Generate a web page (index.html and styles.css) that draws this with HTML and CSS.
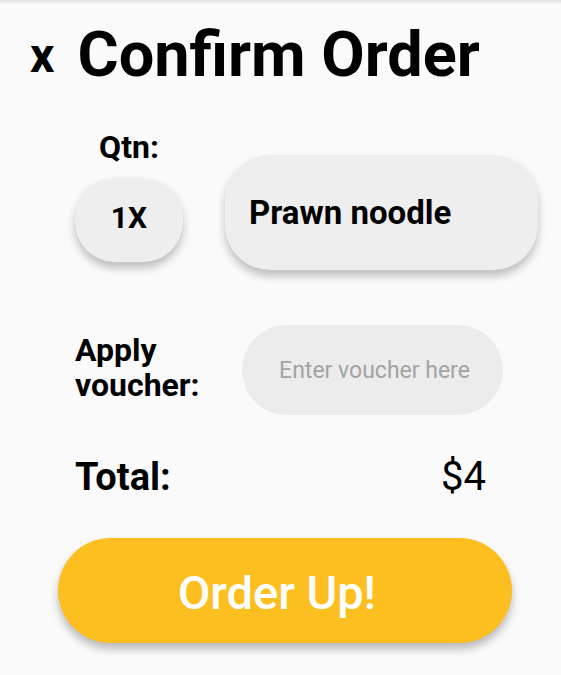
FILE: index.html
```html
<!DOCTYPE html>
<html lang="en">
<head>
<meta charset="utf-8">
<title>Confirm Order</title>
<link rel="stylesheet" href="styles.css">
</head>
<body>
<main class="sheet">
  <div class="topshade"></div>
  <header class="title-bar">
    <span class="close">x</span>
    <h1 class="title">Confirm Order</h1>
  </header>

  <section class="qty-row">
    <div class="qty-col">
      <div class="qty-label">Qtn:</div>
      <div class="qty-pill">1X</div>
    </div>
    <div class="item-box">Prawn noodle</div>
  </section>

  <section class="voucher-row">
    <div class="voucher-label">Apply<br>voucher:</div>
    <div class="voucher-input">Enter voucher here</div>
  </section>

  <section class="total-row">
    <span class="total-label">Total:</span>
    <span class="total-value">$4</span>
  </section>

  <div class="action">
    <button class="order-btn">Order Up!</button>
  </div>
</main>
</body>
</html>
```

FILE: styles.css
```css
html, body {
  margin: 0;
  padding: 0;
  background: #fafafa;
}

body {
  font-family: Roboto, "Liberation Sans", Arial, sans-serif;
  color: #000;
  width: 561px;
  height: 675px;
  overflow: hidden;
}

.sheet {
  display: block;
}

.topshade {
  height: 5px;
  background: linear-gradient(#e2e2e2, #fafafa);
}

.title-bar {
  display: flex;
  align-items: flex-start;
  gap: 23px;
  margin-top: 18px;
  padding-left: 30px;
  height: 64px;
}

.close {
  margin-top: 9px;
  font-size: 48px;
  font-weight: 700;
  line-height: 48px;
}

.title {
  margin: 0;
  font-size: 63px;
  font-weight: 700;
  line-height: 64px;
}

.qty-row {
  display: flex;
  align-items: flex-start;
  gap: 42px;
  margin-top: 43px;
  padding-left: 75px;
}

.qty-col {
  width: 108px;
  display: flex;
  flex-direction: column;
  align-items: center;
}

.qty-label {
  font-size: 32px;
  font-weight: 700;
  line-height: 34px;
}

.qty-pill {
  margin-top: 14px;
  width: 108px;
  height: 84px;
  border-radius: 40px;
  background: #eeeeee;
  box-shadow: 0 6px 9px rgba(0, 0, 0, 0.24);
  display: flex;
  align-items: center;
  justify-content: center;
  box-sizing: border-box;
  padding-bottom: 6px;
  font-size: 30px;
  font-weight: 700;
}

.item-box {
  margin-top: 25px;
  width: 313px;
  height: 115px;
  border-radius: 45px;
  background: #eeeeee;
  box-shadow: 0 6px 9px rgba(0, 0, 0, 0.24);
  display: flex;
  align-items: center;
  box-sizing: border-box;
  padding-left: 24px;
  font-size: 33px;
  font-weight: 700;
}

.voucher-row {
  display: grid;
  grid-template-columns: 167px 261px;
  align-items: center;
  margin-top: 55px;
  padding-left: 75px;
}

.voucher-label {
  font-size: 32px;
  font-weight: 700;
  line-height: 35px;
  padding-bottom: 5px;
}

.voucher-input {
  height: 90px;
  border-radius: 45px;
  background: #ececec;
  display: flex;
  align-items: center;
  justify-content: center;
  padding-left: 4px;
  font-size: 23px;
  color: #a3a3a3;
}

.total-row {
  display: flex;
  justify-content: space-between;
  align-items: baseline;
  width: 411px;
  margin-top: 41px;
  margin-left: 75px;
  line-height: 42px;
  font-size: 38px;
}

.total-label {
  font-weight: 700;
}

.total-value {
  font-weight: 400;
  font-size: 40px;
}

.action {
  margin-top: 40px;
  padding-left: 58px;
}

.order-btn {
  width: 454px;
  height: 105px;
  border: none;
  border-radius: 53px;
  background: #fdbf1f;
  color: #ffffff;
  font-family: Roboto, "Liberation Sans", Arial, sans-serif;
  font-size: 47px;
  font-weight: 500;
  padding: 4px 16px 0 0;
  box-shadow: 0 6px 8px rgba(0, 0, 0, 0.26);
  cursor: pointer;
}
```
